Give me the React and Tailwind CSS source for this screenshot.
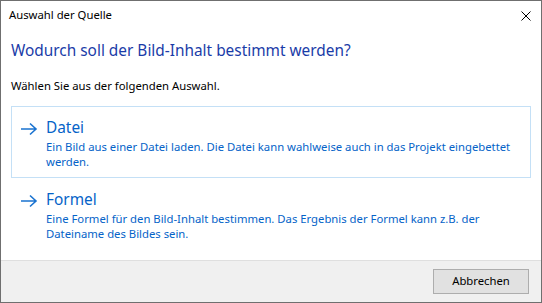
import React from "react";

function Arrow() {
  return (
    <svg width="18" height="14" viewBox="0 0 18 14" className="shrink-0">
      <path d="M1 7H16M10 1.5L16 7L10 12.5" fill="none" stroke="#1a73d0" strokeWidth="1.6" />
    </svg>
  );
}

function Link({ title, lines, active }) {
  return (
    <div
      className={
        "flex mx-[10px] pl-[8px] pr-[10px] border pt-[11px] pb-[8px] " +
        (active ? "border-[#c4e0f6]" : "border-transparent")
      }
    >
      <div className="w-[26px] pt-[4px] flex justify-start">
        <Arrow />
      </div>
      <div className="flex flex-col">
        <div className="text-[15.4px] leading-[20px] text-[#0563c8]">{title}</div>
        <div className="text-[11.3px] leading-[15px] text-[#0563c8] mt-[1px] whitespace-nowrap">
          {lines.map((l, i) => (
            <div key={i}>{l}</div>
          ))}
        </div>
      </div>
    </div>
  );
}

export default function App() {
  return (
    <div
      className="w-[542px] h-[303px] bg-white border border-[#6f6f6f] flex flex-col overflow-hidden"
      style={{ fontFamily: '"Noto Sans", "Open Sans", sans-serif' }}
    >
      <div className="h-[29px] flex items-center justify-between pl-[8px] pr-[10px] shrink-0">
        <span className="text-[11.3px] text-black">Auswahl der Quelle</span>
        <svg width="10" height="10" viewBox="0 0 10 10">
          <path d="M0.5 0.5L9.5 9.5M9.5 0.5L0.5 9.5" stroke="#000" strokeWidth="1" />
        </svg>
      </div>
      <div className="flex-1 flex flex-col">
        <div className="pl-[10px] pt-[11px] text-[15.4px] leading-[20px] text-[#1a3ca8]">
          Wodurch soll der Bild-Inhalt bestimmt werden?
        </div>
        <div className="pl-[10px] pt-[17px] text-[11.3px] leading-[15px] text-black">
          Wählen Sie aus der folgenden Auswahl.
        </div>
        <div className="mt-[13px] flex flex-col">
          <Link
            title="Datei"
            active
            lines={[
              "Ein Bild aus einer Datei laden. Die Datei kann wahlweise auch in das Projekt eingebettet",
              "werden.",
            ]}
          />
          <Link
            title="Formel"
            lines={[
              "Eine Formel für den Bild-Inhalt bestimmen. Das Ergebnis der Formel kann z.B. der",
              "Dateiname des Bildes sein.",
            ]}
          />
        </div>
      </div>
      <div className="h-[42px] shrink-0 bg-[#f0f0f0] border-t border-[#dfdfdf] flex items-center justify-end pr-[12px]">
        <button className="w-[96px] h-[25px] bg-[#e1e1e1] border border-[#adadad] text-[11.3px] text-black">
          Abbrechen
        </button>
      </div>
    </div>
  );
}
